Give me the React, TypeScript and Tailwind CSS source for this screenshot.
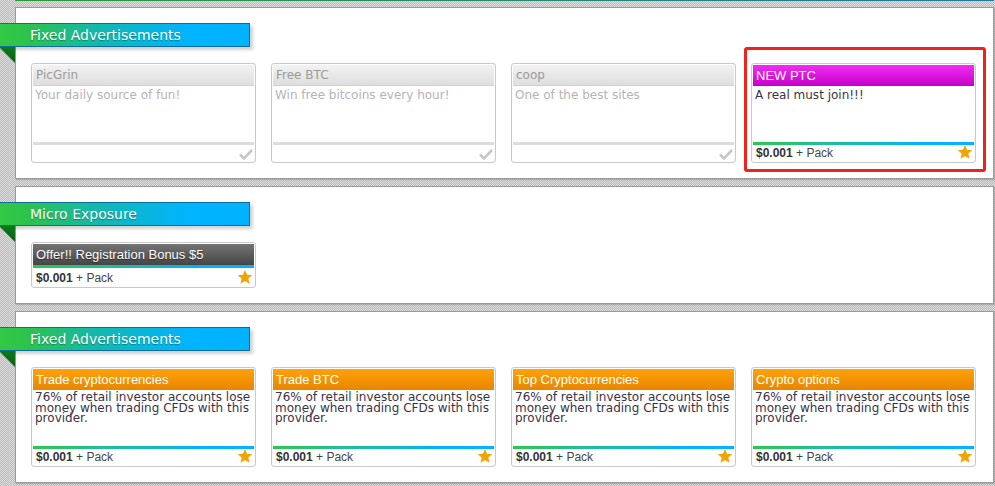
import React from "react";

type Ad = {
  title: string;
  desc?: string;
  kind: "done" | "new" | "dark" | "orange";
  highlight?: boolean;
};

const fixedTop: Ad[] = [
  { title: "PicGrin", desc: "Your daily source of fun!", kind: "done" },
  { title: "Free BTC", desc: "Win free bitcoins every hour!", kind: "done" },
  { title: "coop", desc: "One of the best sites", kind: "done" },
  { title: "NEW PTC", desc: "A real must join!!!", kind: "new", highlight: true },
];

const cfd = "76% of retail investor accounts lose money when trading CFDs with this provider.";

const fixedBottom: Ad[] = [
  { title: "Trade cryptocurrencies", desc: cfd, kind: "orange" },
  { title: "Trade BTC", desc: cfd, kind: "orange" },
  { title: "Top Cryptocurrencies", desc: cfd, kind: "orange" },
  { title: "Crypto options", desc: cfd, kind: "orange" },
];

const verdana = "font-['DejaVu_Sans',Verdana,sans-serif]";
const arial = "font-['Liberation_Sans',Arial,sans-serif]";

function Star() {
  return (
    <svg width="16" height="16" viewBox="0 0 24 24" className="shrink-0">
      <path
        d="M12 1.5l3.1 7.2 7.8.6-5.9 5.1 1.8 7.6L12 17.9l-6.8 4.1 1.8-7.6-5.9-5.1 7.8-.6z"
        fill="#f5a300"
      />
    </svg>
  );
}

function Check() {
  return (
    <svg width="14" height="12" viewBox="0 0 14 12" className="shrink-0">
      <path d="M1 6.5l4 4L13 2" fill="none" stroke="#c8c8c8" strokeWidth="2.6" />
    </svg>
  );
}

function Ribbon({ label }: { label: string }) {
  return (
    <div className="relative -ml-[17px] h-[24px] w-[251px]">
      <div className="flex h-full items-center border border-[#0a6fa0] border-l-0 bg-[linear-gradient(to_right,#33c844_0%,#2cc24e_12%,#12b8b0_40%,#00b4ff_75%,#00b2ff_100%)] pl-[31px] shadow-[3px_3px_3px_rgba(0,0,0,0.18)]">
        <span className={`${verdana} text-[14px] text-white [text-shadow:0_1px_1px_rgba(0,60,40,0.45)]`}>
          {label}
        </span>
      </div>
      <div className="absolute left-0 top-[24px] h-[16px] w-[16px] bg-[linear-gradient(to_bottom,#0a7a1a,#0f5f14)] [clip-path:polygon(0_0,100%_0,100%_100%)]" />
    </div>
  );
}

function Card({ ad }: { ad: Ad }) {
  const head =
    ad.kind === "done"
      ? `bg-[linear-gradient(#f2f2f2,#dedede)] text-[#9a9a9a] ${verdana} text-[12px] border-b border-[#d0d0d0]`
      : ad.kind === "new"
      ? `bg-[linear-gradient(#f22cf2,#c400c8)] text-white ${arial} text-[13px]`
      : ad.kind === "dark"
      ? `bg-[linear-gradient(#747474,#454545)] text-white ${arial} text-[13px] [text-shadow:0_1px_1px_rgba(0,0,0,0.5)]`
      : `bg-[linear-gradient(#ffa10a,#e88600)] text-white ${arial} text-[13px]`;

  return (
    <div className="relative">
      <div
        className={`flex w-[225px] flex-col rounded-[3px] border border-[#c9c9c9] bg-white p-px ${
          ad.desc ? "h-[100px]" : ""
        }`}
      >
        <div className={`flex h-[21px] items-center px-[3px] ${head}`}>{ad.title}</div>
        {ad.desc && (
          <div
            className={`flex-1 pl-[2px] pt-[2px] ${verdana} text-[12px] ${
              ad.kind === "orange"
                ? "leading-[10.5px] text-[#3a3346]"
                : ad.kind === "done"
                ? "leading-[14px] text-[#b4b4b4]"
                : "leading-[14px] text-[#3a3346]"
            }`}
          >
            {ad.desc}
          </div>
        )}
        <div
          className={`h-[3px] ${
            ad.kind === "done"
              ? "bg-[#dcdcdc]"
              : "bg-[linear-gradient(to_right,#2ec84a,#16bcb0_45%,#00b2ff_75%)]"
          }`}
        />
        <div
          className={`flex items-end justify-between pb-px pl-[3px] pr-[1px] ${
            ad.desc ? "h-[16px]" : "h-[18px]"
          }`}
        >
          {ad.kind === "done" ? (
            <span />
          ) : (
            <span className={`${arial} text-[12px] leading-[14px] text-[#444]`}>
              <b className="text-[#333]">$0.001</b> + Pack
            </span>
          )}
          {ad.kind === "done" ? <Check /> : <Star />}
        </div>
      </div>
      {ad.highlight && (
        <div className="pointer-events-none absolute -bottom-[9px] -left-[7px] -right-[10px] -top-[16px] rounded-[3px] border-[3px] border-[#f0231c]" />
      )}
    </div>
  );
}

function Panel({ label, ads }: { label: string; ads: Ad[] }) {
  return (
    <section className="relative border border-[#9a9a9a] bg-white pb-[15px] pt-[15px] shadow-[1px_1px_1px_rgba(0,0,0,0.15)]">
      <Ribbon label={label} />
      <div className="mt-[16px] flex gap-[15px] pl-[15px]">
        {ads.map((a) => (
          <Card key={a.title} ad={a} />
        ))}
      </div>
    </section>
  );
}

export default function App() {
  return (
    <main className="min-h-[486px] w-[995px] bg-[repeating-conic-gradient(#b9b9b9_0_25%,#dedede_0_50%)] bg-[length:2px_2px] pl-[15px] pr-[1px]">
      <div className="h-px bg-[linear-gradient(to_right,#2a9a3a,#1a7aa0)]" />
      <div className="flex flex-col gap-[7px] pt-[6px]">
        <Panel label="Fixed Advertisements" ads={fixedTop} />
        <Panel
          label="Micro Exposure"
          ads={[{ title: "Offer!! Registration Bonus $5", kind: "dark" }]}
        />
        <Panel label="Fixed Advertisements" ads={fixedBottom} />
      </div>
    </main>
  );
}
